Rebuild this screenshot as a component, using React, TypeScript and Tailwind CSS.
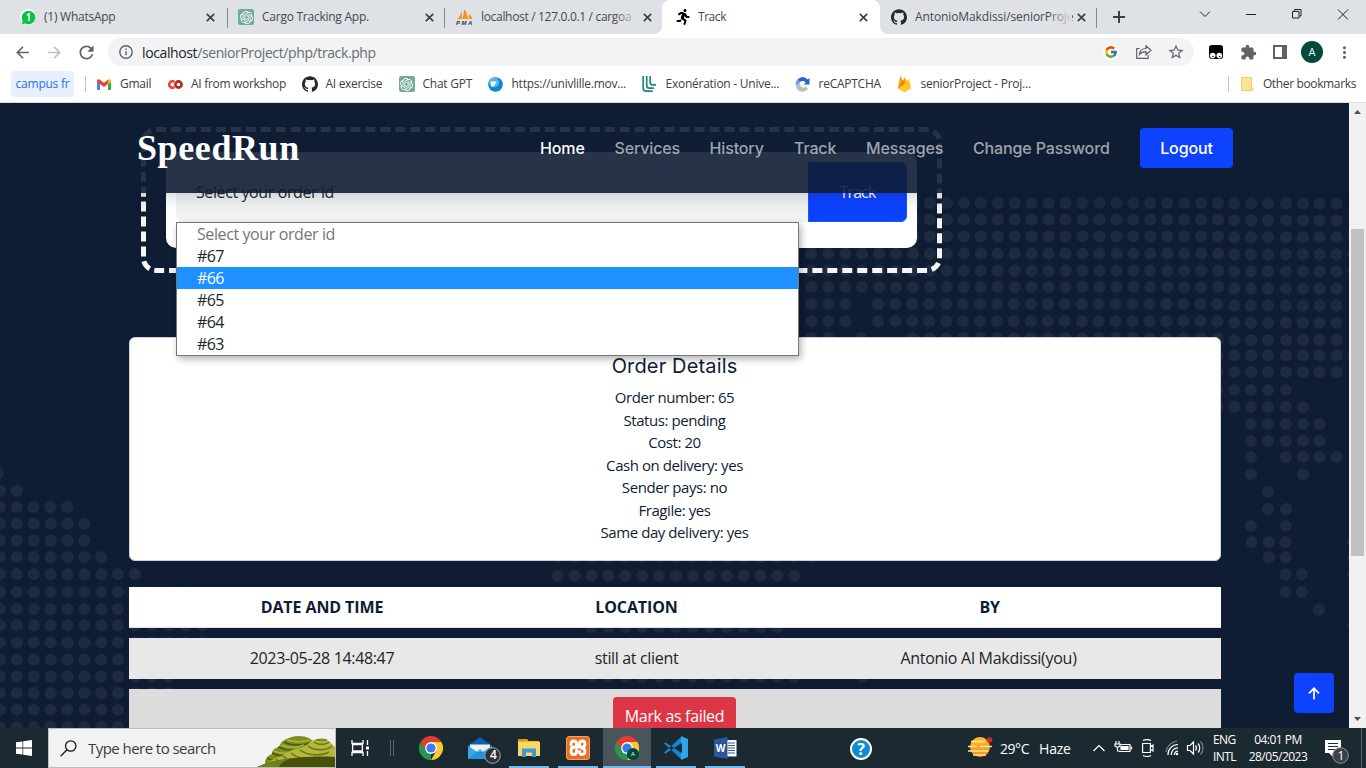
import type { ReactNode } from "react";
import { SiOpenai, SiGithub } from "react-icons/si";
import { FcGoogle } from "react-icons/fc";
import { FaRunning } from "react-icons/fa";
import { MdArrowBack, MdArrowForward, MdRefresh, MdExtension, MdStarBorder, MdMoreVert } from "react-icons/md";

/* ---------- world map dots ---------- */

const seq = (from: number, count: number, step = 16.95) =>
  Array.from({ length: count }, (_, i) => from + i * step);

const EAST = [1234.3, 1251, 1268, 1286, 1303, 1319.5, 1336.5];

const DOT_ROWS: { y: number; xs: number[] }[] = [
  ...[118, 135, 152, 169, 186].map((y) => ({ y, xs: [...seq(640, 35), ...EAST] })),
  ...[203, 219.5, 236.5, 253.7, 270.7, 287].map((y) => ({ y, xs: seq(811.3, 25) })),
  { y: 304, xs: [811.3, 828.3, 845.3, ...seq(878.3, 21)] },
  { y: 321.3, xs: [811.3, 828.3, 845.3, ...seq(878.3, 21)] },
  { y: 338, xs: [811.3, 828.3, 861, ...seq(912.5, 19)] },
  ...[203.3, 220.3, 237.3, 254.3, 271.3, 288.7, 305.7, 322.7, 340, 355.3, 372].map((y) => ({
    y,
    xs: y < 340 ? EAST : [1217.3, ...EAST],
  })),
  ...[237.3, 254.3, 271.3, 355.3].map((y) => ({ y, xs: [1353.7] })),
  { y: 390, xs: [1217.3, 1234.3, 1251, 1268, 1286] },
  { y: 407, xs: [1217.3, 1234.3, 1251, 1268, 1286, 1303] },
  { y: 424, xs: [1251, 1268, 1286, 1303, 1319.5] },
  { y: 441, xs: [1251, 1268, 1286, 1303, 1319.5] },
  { y: 457, xs: [1251, 1286, 1303, 1319.5, 1336.5] },
  { y: 474.3, xs: [1251, 1303] },
  { y: 492, xs: [1268] },
  { y: 509, xs: [1268, 1286] },
  { y: 526, xs: [1251, 1286] },
  { y: 542, xs: [1251.7, 1268.7, 1285.5, 1353.5] },
  { y: 557.3, xs: [1268.7, 1285.5, 1353.5] },
  { y: 574.3, xs: [1285.5, 1302, 1353.5] },
  { y: 592, xs: [1285.5, 1302] },
  { y: 609.7, xs: [1319] },
  { y: 625, xs: [1353.5] },
  { y: 472.7, xs: [-2] },
  { y: 490.7, xs: [0, 16.7] },
  { y: 507, xs: [0, 16.7, 33.5, 50.3, 67.3] },
  { y: 523.7, xs: seq(0, 6, 16.87) },
  { y: 540.7, xs: seq(0, 6, 16.87) },
  { y: 557, xs: [...seq(0, 7, 16.87), ...seq(557.7, 16, 16.9)] },
  { y: 574.2, xs: seq(0, 9, 16.87) },
  { y: 575.7, xs: seq(557.7, 15, 16.9) },
  { y: 592, xs: seq(0, 12, 16.87) },
  { y: 609, xs: seq(0, 8, 16.87) },
  { y: 625.3, xs: seq(0, 13, 16.87) },
  { y: 627, xs: seq(591.5, 12, 16.9) },
  { y: 642.5, xs: seq(0, 13, 16.87) },
  { y: 659.7, xs: seq(0, 8, 16.87) },
  { y: 676.7, xs: [...seq(0, 11, 16.87), ...seq(591.5, 13, 16.9), 862.3] },
  { y: 693, xs: seq(0, 11, 16.87) },
  { y: 709.8, xs: seq(0, 8, 16.87) },
  { y: 727, xs: seq(0, 8, 16.87) },
];

function MapDots() {
  return (
    <svg className="absolute inset-0" width="1350" height="625" viewBox="0 103 1350 625" fill="#1d2a40">
      {DOT_ROWS.map((row, r) => row.xs.map((x) => <circle key={`${r}-${x}`} cx={x} cy={row.y} r="6.1" />))}
    </svg>
  );
}

/* ---------- browser chrome ---------- */

function CloseX() {
  return (
    <svg width="9" height="9" viewBox="0 0 9 9" stroke="#3c4043" strokeWidth="1.7" className="shrink-0">
      <path d="M.8.8l7.4 7.4M8.2.8L.8 8.2" />
    </svg>
  );
}

function GptIcon() {
  return (
    <span className="flex size-4 shrink-0 items-center justify-center rounded-[2px] bg-[#74aa9c]">
      <SiOpenai size={13} color="#fff" />
    </span>
  );
}

function PmaIcon() {
  return (
    <svg width="17" height="16" viewBox="0 0 17 16" className="shrink-0">
      <path d="M1 10.5C3.5 8 5 4.500 5.500 1.500L6.500 10zM7 10L8.500 .5C11 3.500 12 7 12 10zM12.500 10l.5-5c2 1.500 3 3 3.300 5z" fill="#f89c0e" />
      <path d="M7.500 10l1-9" stroke="#6c78af" strokeWidth=".5" />
      <text x="0" y="16" fontSize="6" fontWeight="700" fontStyle="italic" fill="#333a5e" fontFamily="Liberation Sans, sans-serif" textLength="16">PMA</text>
    </svg>
  );
}

function Tab({ icon, title, className, fade }: { icon: ReactNode; title: string; className: string; fade?: boolean }) {
  return (
    <div className={`relative flex h-[34px] shrink-0 items-center ${className}`}>
      {icon}
      <span className="ml-2 flex-1 whitespace-nowrap">{title}</span>
      {fade && <span className="absolute right-[24px] h-5 w-6 bg-linear-to-r from-[#dee1e6]/0 to-[#dee1e6]" />}
      <CloseX />
    </div>
  );
}

function TabStrip() {
  return (
    <div className="flex h-[34px] bg-[#dee1e6] text-[12px] tracking-[-0.25px] text-[#45494d]">
      <Tab
        className="w-[227px] border-r border-transparent pr-[11px] pl-5"
        title="(1) WhatsApp"
        icon={
          <span className="flex size-4 shrink-0 items-center justify-center rounded-full bg-white">
            <svg width="15" height="15" viewBox="0 0 15 15">
              <path d="M7.500 .7a6.800 6.800 0 1 1-3.300 12.700L.8 14.200l.9-3.400A6.800 6.800 0 0 1 7.500.7z" fill="#0cc143" />
              <path d="M6 5.200l2-1.200v7" stroke="#fff" strokeWidth="1.600" fill="none" />
            </svg>
          </span>
        }
      />
      <div className="mt-2 h-5 w-px bg-[#85888c]" />
      <Tab className="w-[216px] pr-[10px] pl-[10px]" title="Cargo Tracking App." icon={<GptIcon />} />
      <div className="mt-2 h-5 w-px bg-[#85888c]" />
      <Tab className="w-[217px] pr-[10px] pl-[11px] tracking-[-0.32px]" title="localhost / 127.0.0.1 / cargoa" icon={<PmaIcon />} fade />
      <div className="relative flex h-[34px] w-[218px] items-center rounded-t-[8px] bg-white pr-3 pl-[13px]">
        <svg className="absolute bottom-0 -left-2" width="8" height="8" fill="#fff"><path d="M8 0v8H0a8 8 0 0 0 8-8z" /></svg>
        <svg className="absolute -right-2 bottom-0" width="8" height="8" fill="#fff"><path d="M0 0v8h8a8 8 0 0 1-8-8z" /></svg>
        <FaRunning size={16} color="#000" />
        <span className="ml-[7px] flex-1 tracking-[-0.45px]">Track</span>
        <CloseX />
      </div>
      <Tab className="w-[216px] pr-[10px] pl-[11px] tracking-[-0.1px]" title="AntonioMakdissi/seniorProje" icon={<SiGithub size={16} color="#24292f" className="shrink-0" />} fade />
      <div className="mt-2 h-5 w-px bg-[#85888c]" />
      <svg width="269" height="34" viewBox="1097 0 269 34" fill="none" stroke="#202124">
        <path d="M1113 17h12M1119 11v12" strokeWidth="2" stroke="#3c4043" />
        <path d="M1200 11.500l5 5 5-5M1246 14.500h10M1292.500 11.500h6.500v6.500h-6.500zM1294.500 11v-1.500h6.500v6.500h-1.500M1338 9.500l10 10M1348 9.500l-10 10" />
      </svg>
    </div>
  );
}

function Toolbar() {
  return (
    <div className="flex h-9 items-center">
      <MdArrowBack size={19} color="#5f6368" className="ml-[12.5px]" />
      <MdArrowForward size={19} color="#bcbec1" className="ml-[13px]" />
      <MdRefresh size={21} color="#5f6368" className="ml-[12px]" />
      <div className="ml-[11.5px] flex h-7 w-[1086px] items-center rounded-full bg-[#f1f3f4] pl-[11px]">
        <svg width="14" height="14" viewBox="0 0 14 14" fill="none" stroke="#5f6368" strokeWidth="1.400">
          <circle cx="7" cy="7" r="6.200" />
          <path d="M7 6.200v4M7 3.600v1.400" />
        </svg>
        <span className="ml-[9px] flex-1 text-[14px] tracking-[-0.39px] text-[#686c70]">
          <span className="text-[#202124]">localhost</span>/seniorProject/php/track.php
        </span>
        <span className="flex size-4 items-center justify-center rounded-full bg-white"><FcGoogle size={14} /></span>
        <svg className="ml-[17px]" width="16" height="14" viewBox="0 0 16 14" fill="none" stroke="#5f6368" strokeWidth="1.200">
          <path d="M3.500 3.500H.7v9.800h11.500V10M3.500 9.500c.3-4 2.500-6 6.500-6V.8l5 4.500-5 4.500V6.700c-3 0-5 .8-6.500 2.800z" />
        </svg>
        <MdStarBorder size={18} color="#5f6368" className="mr-[9px] ml-[15px]" />
      </div>
      <svg className="ml-[15px]" width="14" height="14" viewBox="0 0 14 14">
        <rect width="14" height="14" rx="3" fill="#000" />
        <circle cx="3.700" cy="10.600" r="2.800" fill="#fff" /><circle cx="10.300" cy="10.600" r="2.800" fill="#fff" />
        <circle cx="4" cy="11.500" r=".8" /><circle cx="10.600" cy="11.500" r=".8" />
      </svg>
      <MdExtension size={17} color="#5f6368" className="ml-[17px]" />
      <svg className="ml-[16px]" width="14" height="14" viewBox="0 0 14 14"><path d="M0 0h14v14H0zM2 2v10h7V2z" fill="#5f6368" fillRule="evenodd" /></svg>
      <span className="ml-[14px] flex size-[22px] items-center justify-center rounded-full bg-[#00493d] text-[11px] text-white">A</span>
      <MdMoreVert size={19} color="#5f6368" className="ml-[12px]" />
    </div>
  );
}

function Bookmark({ icon, label, className }: { icon: ReactNode; label: string; className: string }) {
  return (
    <span className={`flex shrink-0 items-center whitespace-nowrap ${className}`}>
      <span className="flex w-4 shrink-0 justify-center">{icon}</span>
      <span className="ml-2">{label}</span>
    </span>
  );
}

function Bookmarks() {
  return (
    <div className="flex h-[33px] items-center border-b border-[#dadce0] pb-[4px] text-[12px] tracking-[-0.25px] text-[#3c4043]">
      <span className="ml-[11px] flex h-[26px] w-[63px] items-center justify-center rounded-[4px] bg-[#e8f0fe] text-[#1a73e8]">campus fr</span>
      <span className="ml-[11px] h-4 w-px bg-[#c4c7cb]" />
      <Bookmark className="ml-[10px] w-[71px]" label="Gmail" icon={
        <svg width="14" height="11" viewBox="0 0 14 11">
          <path d="M0 2v9h3V5z" fill="#4285f4" /><path d="M14 2v9h-3V5z" fill="#34a853" />
          <path d="M0 1.500C.5 0 2 0 3 .8l4 3 4-3V5L7 8 0 3z" fill="#ea4335" /><path d="M11 .8c1-.8 3-.6 3 1.200v1l-3 2.300z" fill="#fbbc04" />
        </svg>
      } />
      <Bookmark className="w-[134.500px] tracking-[-0.3px]" label="AI from workshop" icon={
        <svg width="15" height="9" viewBox="0 0 15 9" fill="none" strokeWidth="2.600">
          <path d="M6.500 2A3.200 3.200 0 1 0 6.500 7" stroke="#e8453c" /><circle cx="10.500" cy="4.500" r="3.100" stroke="#b3261e" />
        </svg>
      } />
      <Bookmark className="w-[97px] tracking-[-0.3px]" label="AI exercise" icon={<SiGithub size={16} color="#24292f" />} />
      <Bookmark className="w-[89px]" label="Chat GPT" icon={<GptIcon />} />
      <Bookmark className="w-[154px]" label="https://univlille.mov..." icon={
        <svg width="15" height="15" viewBox="0 0 15 15">
          <circle cx="7.500" cy="7.500" r="7.300" fill="#0b86cf" /><circle cx="6" cy="5.500" r="5" fill="#58b6ea" />
          <path d="M2.500 4.500l6 0-2 4-3 1.500z" fill="#fff" />
        </svg>
      } />
      <Bookmark className="w-[153px]" label="Exonération - Unive..." icon={
        <svg width="15" height="16" viewBox="0 0 15 16" fill="none" stroke="#23857c" strokeWidth="1.700">
          <path d="M1.200 0v12c0 2 1 3.200 3 3.200h6.500M4.700 0v9.500c0 1.800 1 2.600 2.500 2.600H12M8.200 0v6.500C8.200 8 9 8.800 10.500 8.800H14" />
        </svg>
      } />
      <Bookmark className="w-[102px]" label="reCAPTCHA" icon={
        <svg width="15" height="15" viewBox="0 0 15 15">
          <path d="M14.500 1v6.500H8.700l2-2C9 3.700 6.500 3.500 5 5L2.500 2.700C6-1 10-.5 12.500 2.500z" fill="#2a63d8" />
          <path d="M.5 7.500C.5 5 1.500 3.500 3 2.200L5.200 5C4.500 6 4.300 7 4.500 7.500z" fill="#6e9bf0" />
          <path d="M0 7h5c0 3 3.500 5 6 2.500l2 2.500C9 16.500 1 15.500 1 8z" fill="#b9bcc0" />
        </svg>
      } />
      <Bookmark className="" label="seniorProject - Proj..." icon={
        <svg width="13" height="16" viewBox="0 0 13 16">
          <path d="M0 12.500L2 .8c0-.5.7-.6.9-.1L5 4.500 6.200 2.300c.2-.4.7-.4.9 0L12.700 12.500 6.500 16z" fill="#ffa000" />
          <path d="M0 12.500l10.500-9c.3-.3.8-.1.900.3L12.900 12.500 7.100 15.700c-.4.2-.9.2-1.300 0z" fill="#ffca28" /><path d="M0 12.500L5 4.500l2.300 3z" fill="#f57c00" />
        </svg>
      } />
      <span className="ml-auto h-4 w-px bg-[#c4c7cb]" />
      <svg className="ml-[12px]" width="12" height="14" viewBox="0 0 12 14" fill="#fee594" stroke="#f0cf5e">
        <path d="M.5.5h10v9l1 1v3H.5zM9 13.500v-4" />
      </svg>
      <span className="mr-[10px] ml-[10px] tracking-[-0.36px]">Other bookmarks</span>
    </div>
  );
}

/* ---------- page ---------- */

function SiteHeader() {
  return (
    <header className="absolute inset-x-0 top-0 z-20 flex h-[90px] items-center bg-[rgba(14,29,52,0.9)] pl-[137px] font-['Inter',sans-serif] text-[16px] font-medium tracking-[-0.13px] whitespace-nowrap text-white/60 shadow-[0_0_20px_rgba(14,29,52,0.25)]">
      <span className="w-[403px] font-['Liberation_Serif',serif] text-[36px] leading-10 font-bold tracking-[0.6px] text-white">SpeedRun</span>
      <nav className="flex">
        <span className="w-[74.500px] text-white">Home</span>
        <span className="w-[95px]">Services</span>
        <span className="w-[84.500px]">History</span>
        <span className="w-[72px]">Track</span>
        <span className="w-[107px]">Messages</span>
        <span className="w-[167px]">Change Password</span>
      </nav>
      <span className="flex h-10 w-[93px] items-center justify-center rounded-[4px] bg-[#0d42ff] text-white">Logout</span>
    </header>
  );
}

const OPTIONS = ["Select your order id", "#67", "#66", "#65", "#64", "#63"];

function TrackForm() {
  return (
    <div className="mt-6 ml-[141px] h-[146px] w-[801px] rounded-[15px] border-[5px] border-dashed border-[#f5f5f5] p-5">
      <div className="flex h-24 rounded-[10px] bg-white p-[10px]">
        <div className="relative flex h-[60px] w-[632px] items-center rounded-l-[8px] bg-[#f2f3f3] pl-5 text-[16px] tracking-[-0.4px] text-[#212529]">
          Select your order id
          <ul className="absolute top-[60px] left-0 z-30 h-[134px] w-[623px] border border-[#767676] bg-white tracking-[-0.4px] shadow-[2px_3px_7px_rgba(0,0,0,0.3)]">
            {OPTIONS.map((o, i) => (
              <li key={o} className={`h-[22px] pl-5 ${i === 0 ? "leading-[23px] text-[#757575]" : i === 2 ? "bg-[#1e90ff] leading-[23px] tracking-[-0.6px] text-white" : "leading-[23px] tracking-[-0.6px] text-[#212529]"}`}>{o}</li>
            ))}
          </ul>
        </div>
        <div className="flex h-[60px] w-[99px] items-center justify-center rounded-r-[6px] border border-[#0d5cfd] bg-[#0d42ff] text-[16px] tracking-[-0.9px] text-white">Track</div>
      </div>
    </div>
  );
}

const DETAILS = ["Order number: 65", "Status: pending", "Cost: 20", "Cash on delivery: yes", "Sender pays: no", "Fragile: yes", "Same day delivery: yes"];

function Page() {
  return (
    <main className="relative h-[625px] w-[1349px] overflow-hidden bg-[#0e1d34]">
      <MapDots />
      <SiteHeader />
      <div className="relative z-10 flow-root">
        <TrackForm />
        <section className="mt-16 ml-[129px] h-[224px] w-[1092px] rounded-[6px] border border-[#cfd2d6] bg-white pt-[16px] text-center text-[#0e1d34]">
          <h2 className="mb-[8px] pr-[1px] font-['Inter',sans-serif] text-[20px] leading-6 font-normal tracking-[0.15px]">Order Details</h2>
          {DETAILS.map((d) => (
            <p key={d} className="pr-[1px] text-[15px] leading-[22.5px] tracking-[-0.43px]">{d}</p>
          ))}
        </section>
        <div className="mt-[26px] ml-[129px] grid w-[1092px] grid-cols-[386px_243px_463px] gap-y-[10px] text-center text-[16px] leading-[41px] tracking-[-0.34px] text-[#212529] *:h-[41px]">
          <div className="border-b border-[#dee2e6] bg-white font-bold tracking-[-0.1px] text-[#0e1d34]">DATE AND TIME</div>
          <div className="border-b border-[#dee2e6] bg-white font-bold tracking-[-0.1px] text-[#0e1d34]">LOCATION</div>
          <div className="border-b border-[#dee2e6] bg-white font-bold tracking-[-0.4px] text-[#0e1d34]">BY</div>
          <div className="bg-[#e8e8e8]">2023-05-28 14:48:47</div>
          <div className="bg-[#e8e8e8]">still at client</div>
          <div className="bg-[#e8e8e8] pr-[2px] tracking-[-0.28px]">Antonio Al Makdissi(you)</div>
          <div className="col-span-3 flex justify-center bg-[#dcdcdc] pt-2 pr-[1px]">
            <div className="h-[38px] w-[123px] shrink-0 rounded-[4px] bg-[#dc3545] leading-[38px] text-white">Mark as failed</div>
          </div>
        </div>
      </div>
      <div className="absolute top-[570px] left-[1294px] z-20 flex size-10 items-center justify-center rounded-[4px] bg-[#0d42ff]">
        <svg width="12" height="13" viewBox="0 0 12 13" fill="none" stroke="#fff" strokeWidth="1.700"><path d="M6 12.500V1.500M1 6.300l5-5 5 5" /></svg>
      </div>
    </main>
  );
}

function Scrollbar() {
  return (
    <div className="flex w-[17px] flex-col items-center bg-[#f1f1f1]">
      <svg width="7" height="4" className="mt-[7px]" fill="#505050"><path d="M0 4L3.500 0 7 4z" /></svg>
      <div className="mt-[115px] h-[327px] w-[13px] bg-[#c1c1c1]" />
      <svg width="7" height="4" className="mt-[161px]" fill="#505050"><path d="M0 0l3.500 4L7 0z" /></svg>
    </div>
  );
}

/* ---------- taskbar ---------- */

function ChromeLogo() {
  return (
    <svg width="24" height="24" viewBox="0 0 24 24">
      <path d="M12 12V24A12 12 0 0 1 1.600 6z" fill="#249a50" />
      <path d="M12 6h10.400A12 12 0 0 0 1.600 6l5.200 9z" fill="#e33b2e" />
      <path d="M17.200 15L12 24A12 12 0 0 0 22.400 6H12z" fill="#fcc934" />
      <circle cx="12" cy="12" r="5.900" fill="#fff" /><circle cx="12" cy="12" r="4.600" fill="#3b7ded" />
    </svg>
  );
}

function TaskItem({ children, bar, className }: { children: ReactNode; bar?: string; className?: string }) {
  return (
    <div className={`relative flex h-10 w-12 shrink-0 items-center justify-center ${className ?? ""}`}>
      {children}
      {bar && <span className={`absolute bottom-0 h-[2px] bg-[#76b9ed] ${bar}`} />}
    </div>
  );
}

function SearchArt() {
  return (
    <svg width="78" height="31" viewBox="0 0 78 31">
      <path d="M8 28C8 23 10 20 15 18c0-4 3-6 7-7C24 4 33 0 42 0c8 0 13 3 15 7l3 19z" fill="#7f8d1e" />
      <path d="M27 6c7 4 20 4 28 0M21 11c8 4 18 4 26 0M15 17c7 4 15 4 23 0M10 22c5 3 11 3 17 0" stroke="#4d5a10" strokeWidth="1.500" fill="none" />
      <path d="M30 4c7 2 16 2 23 0M24 9c8 3 16 3 23 0M17 15c7 3 14 3 21 0" stroke="#aab53a" strokeWidth="1.500" fill="none" />
      <path d="M10 29c3-7 13-7 20-12 8-6 17-4 22-10 4-5 18-5 21-1l5 5v20H10z" fill="#b2b83a" />
      <path d="M57 6c3 3 12 3 15 0M51 10c6 5 19 5 24 0M43 14c8 6 22 6 29 2M34 17c7 6 18 7 25 4M26 20c5 5 13 6 19 4M19 23c4 4 8 4 13 3" stroke="#68731a" strokeWidth="1.500" fill="none" />
      <ellipse cx="64.500" cy="4" rx="6" ry="1.500" fill="#7f8a22" />
      <path d="M0 31c16-7 44-12 78-10v10z" fill="#484f08" />
      <path d="M0 31c12-6 24-8 36-9-8 2-12 5-14 9z" fill="#70801a" />
    </svg>
  );
}

function Taskbar() {
  return (
    <div className="flex h-10 w-[1366px] bg-[#1b2930] text-white">
      <div className="flex w-12 items-center justify-center">
        <svg width="16" height="16" viewBox="0 0 16 16" fill="#fff"><path d="M0 2.300l6.500-.9v6.200H0zM7.200 1.300L16 0v7.600H7.200zM0 8.400h6.500v6.200L0 13.700zM7.200 8.400H16V16l-8.800-1.300z" /></svg>
      </div>
      <div className="flex h-10 w-[288px] items-center border border-[#bdbdbd] bg-[#f2f2f2] pl-[11px] text-[#3c3c3c]">
        <svg width="17" height="17" viewBox="0 0 17 17" fill="none" stroke="#1a1a1a" strokeWidth="1.300"><circle cx="10.700" cy="6" r="5.200" /><path d="M7 9.800L.6 16.300" /></svg>
        <span className="ml-[11px] text-[15px] tracking-[-0.55px]">Type here to search</span>
        <span className="mt-[7px] ml-auto shrink-0"><SearchArt /></span>
      </div>
      <svg width="71" height="40" viewBox="336 0 71 40" className="shrink-0" fill="none" stroke="#fff" strokeWidth="1.300">
        <path d="M352 12v3.500h11V12M352 28v-3.500h11V28M352.600 16.500h9.800v6.500h-9.800zM367.500 12v5M367.500 23v5" />
        <path d="M366 18.500h3v3h-3z" fill="#fff" stroke="none" />
        <path d="M390.500 12v16M393.500 12v16" stroke="#59656b" strokeWidth="1" />
      </svg>
      <TaskItem><ChromeLogo /></TaskItem>
      <TaskItem className="ml-px">
        <svg width="34" height="30" viewBox="0 0 34 30" className="translate-x-[4px] translate-y-[3px]">
          <path d="M1 9.500L13 1l12 8.500V23H1z" fill="#0f5ea8" /><path d="M3 8.500h20V16H3z" fill="#eaf3fa" />
          <path d="M1 10l12 7.500L25 10v13H1z" fill="#38a8e8" /><path d="M1 23l12-10 12 10z" fill="#1c8ad6" opacity=".7" />
          <circle cx="25.500" cy="19.500" r="7.800" fill="#2b343a" stroke="#a3abb0" />
        </svg>
        <span className="absolute top-[18px] left-[34px] text-[12px] leading-[18px] font-semibold">4</span>
      </TaskItem>
      <TaskItem className="ml-px" bar="w-10 left-[4px]">
        <svg width="22" height="20" viewBox="0 0 22 20">
          <path d="M0 1h9l1.500 2H21v15H0z" fill="#f5b51c" /><path d="M0 4h22v14H0z" fill="#fcd667" /><path d="M0 1h8.500v2H0z" fill="#d99a10" />
          <path d="M4 10.500h14V19h-4v-4.500H8V19H4z" fill="#3f97dd" />
        </svg>
        <span className="absolute bottom-0 left-[36px] h-[2px] w-[8px] bg-[#5484ad]" />
      </TaskItem>
      <TaskItem className="ml-px" bar="w-10 left-[4px]">
        <svg width="24" height="24" viewBox="0 0 24 24" fill="none" stroke="#fff" strokeWidth="3.200" strokeLinecap="round" strokeLinejoin="round">
          <rect x=".5" y=".5" width="23" height="23" rx="2.500" fill="#ee6c1e" stroke="#f5a06a" strokeWidth="1" />
          <path d="M5 9V8c0-2 1-3 2.800-3S10.500 6.200 10.500 8v1.500c0 1 .6 1.500 1.500 1.500s1.500-.5 1.500-1.500V8c0-1.800 1-3 2.700-3S19 6 19 8s-1 3-2.800 3H8.500C6.500 11 5 12.500 5 15s1 3.500 2.800 3.500 2.700-1.200 2.700-3V14M16 12.500c2 0 3 1 3 2.800s-1 3.200-2.800 3.200-2.700-1.200-2.700-3" strokeWidth="2.900" />
        </svg>
      </TaskItem>
      <TaskItem className="ml-px bg-[#4a555b]" bar="w-12 left-0">
        <ChromeLogo />
        <span className="absolute top-[20px] left-[24px] flex size-[12px] items-center justify-center rounded-full bg-[#00493d] text-[6px]">A</span>
      </TaskItem>
      <TaskItem className="ml-px" bar="w-10 left-[4px]">
        <svg width="24" height="24" viewBox="0 0 24 24">
          <path d="M1.300 6.200L0 7.500l17 15.500 1-6zM1.300 17.800L0 16.500 17 1l1 6z" fill="#1583cf" />
          <path d="M17 0l7 3v18l-7 3z" fill="#30a5ec" /><path d="M18 7l-7 5 7 5z" fill="#1b2930" />
        </svg>
      </TaskItem>
      <TaskItem className="ml-px" bar="w-10 left-[4px]">
        <svg width="23" height="22" viewBox="0 0 23 22">
          <path d="M12 3h10.500v16.500H12z" fill="#fff" /><path d="M14 6h7M14 8.500h7M14 11h7M14 13.500h7M14 16h7" stroke="#2b579a" strokeWidth="1.100" />
          <path d="M0 2.500L13.500 0v22L0 19.500z" fill="#2b579a" />
          <text x="1.800" y="15" fontSize="10" fontWeight="700" fill="#fff" fontFamily="Open Sans, sans-serif">W</text>
        </svg>
      </TaskItem>
      <div className="ml-[101px] flex w-6 items-center">
        <span className="mt-[1px] flex size-[22px] items-center justify-center rounded-full border-2 border-white bg-[#0f8cd0] text-[16px] font-bold">?</span>
      </div>
      <svg className="ml-[93px]" width="26" height="40" viewBox="967 0 26 40">
        <defs><linearGradient id="sun" x1="0" y1="0" x2="0" y2="1"><stop offset="0" stopColor="#fdc12c" /><stop offset="1" stopColor="#f58b1c" /></linearGradient></defs>
        <circle cx="980" cy="19" r="10" fill="url(#sun)" />
        <path d="M971 13.500h14M968 18.500h9M980 18.500h12M968 23h20M973 27h13" stroke="#ffe3a3" strokeWidth="1.700" />
        <circle cx="989.500" cy="12" r="2.800" fill="#d92c20" />
      </svg>
      <span className="ml-[7px] self-center text-[14px] tracking-[-0.45px] whitespace-nowrap">29°C<span className="ml-[10px] tracking-[-0.2px]">Haze</span></span>
      <svg className="ml-auto" width="120" height="40" viewBox="1087 0 120 40" fill="none" stroke="#fff" strokeWidth="1.200">
        <path d="M1093.500 23l5.500-5.500 5.500 5.500" />
        <path d="M1120.500 16.500h9.500v7h-11M1131.500 18.500v3M1116 13v3M1119 13v3M1115 16h5v2l-2.500 1.500-2.500-1.500zM1117.500 19.500v3.500h2" />
        <path d="M1121 18.500h7v3h-7z" fill="#fff" />
        <path d="M1142.600 15.500h7.800v9h-7.800zM1150.500 18.500l2.500-1.500v6l-2.500-1.500M1143 12.500c2-1.300 6-1.300 8 0M1143 27.500c2 1.300 6 1.300 8 0" />
        <path d="M1168 27a10 10 0 0 1 10-10.500M1171.200 27a6.800 6.800 0 0 1 6.800-7.200M1174.300 27a3.700 3.700 0 0 1 3.700-3.900" />
        <path d="M1166 24a13 13 0 0 1 11-11" stroke="#79848a" /><circle cx="1177" cy="26" r="1.300" fill="#fff" stroke="none" />
        <path d="M1187.500 17.500h2.500l3.500-3.500v12l-3.500-3.500h-2.500zM1195.500 17.500c1.300 1.500 1.300 3.500 0 5M1198 15.500c2.300 2.500 2.300 6.500 0 9" />
        <path d="M1200.500 13.500c3.300 3.500 3.300 9.500 0 13" stroke="#79848a" />
      </svg>
      <div className="ml-[6px] w-[25px] pt-[3px] text-[12px] leading-[17px] tracking-[-0.6px] whitespace-nowrap">ENG<br />INTL</div>
      <div className="ml-[8px] w-[64px] pt-[3px] text-center text-[12px] leading-[17px] tracking-[-0.5px] whitespace-nowrap">04:01 PM<br />28/05/2023</div>
      <svg className="ml-[13px]" width="43" height="40" viewBox="1323 0 43 40">
        <path d="M1325 12h16v13h-8v4l-4-4h-4z" fill="#fff" /><path d="M1328 15.500h10M1328 18.500h10M1328 21.500h7" stroke="#1b2930" strokeWidth="1.100" />
        <circle cx="1340.500" cy="27.500" r="7.800" fill="#3a4247" stroke="#8b9397" />
        <text x="1337.500" y="32" fontSize="12" fill="#fff" fontFamily="Open Sans, sans-serif">1</text>
        <path d="M1361.500 0v40" stroke="#58646a" />
      </svg>
    </div>
  );
}

export default function App() {
  return (
    <div className="flex h-[768px] w-[1366px] flex-col overflow-hidden bg-white font-['Open_Sans','Noto_Sans',sans-serif]">
      <TabStrip />
      <Toolbar />
      <Bookmarks />
      <div className="flex h-[625px]">
        <Page />
        <Scrollbar />
      </div>
      <Taskbar />
    </div>
  );
}
